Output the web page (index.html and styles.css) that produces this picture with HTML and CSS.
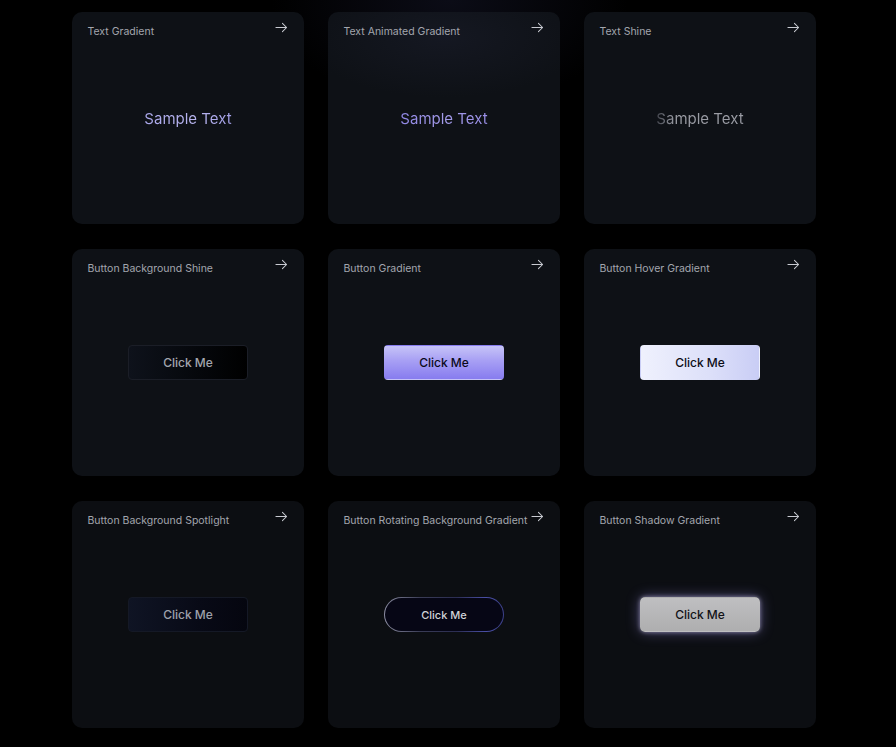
FILE: index.html
```html
<!DOCTYPE html>
<html lang="en">
<head>
<meta charset="utf-8">
<title>Components</title>
<link rel="stylesheet" href="styles.css">
</head>
<body>
<div class="glow-top"></div>
<main class="grid">
  <section class="card">
    <header class="card-head"><span class="card-title">Text Gradient</span><svg class="arrow" viewBox="0 0 14 14"><path d="M1 7h11.5M8 2.5L12.5 7 8 11.5"/></svg></header>
    <div class="card-body"><span class="t-gradient">Sample Text</span></div>
  </section>
  <section class="card card-glow">
    <header class="card-head"><span class="card-title">Text Animated Gradient</span><svg class="arrow" viewBox="0 0 14 14"><path d="M1 7h11.5M8 2.5L12.5 7 8 11.5"/></svg></header>
    <div class="card-body"><span class="t-animated">Sample Text</span></div>
  </section>
  <section class="card">
    <header class="card-head"><span class="card-title">Text Shine</span><svg class="arrow" viewBox="0 0 14 14"><path d="M1 7h11.5M8 2.5L12.5 7 8 11.5"/></svg></header>
    <div class="card-body"><span class="t-shine">Sample Text</span></div>
  </section>

  <section class="card">
    <header class="card-head"><span class="card-title">Button Background Shine</span><svg class="arrow" viewBox="0 0 14 14"><path d="M1 7h11.5M8 2.5L12.5 7 8 11.5"/></svg></header>
    <div class="card-body"><button class="btn btn-shine">Click Me</button></div>
  </section>
  <section class="card">
    <header class="card-head"><span class="card-title">Button Gradient</span><svg class="arrow" viewBox="0 0 14 14"><path d="M1 7h11.5M8 2.5L12.5 7 8 11.5"/></svg></header>
    <div class="card-body"><button class="btn btn-gradient">Click Me</button></div>
  </section>
  <section class="card">
    <header class="card-head"><span class="card-title">Button Hover Gradient</span><svg class="arrow" viewBox="0 0 14 14"><path d="M1 7h11.5M8 2.5L12.5 7 8 11.5"/></svg></header>
    <div class="card-body"><button class="btn btn-hover">Click Me</button></div>
  </section>

  <section class="card card-dim">
    <header class="card-head"><span class="card-title">Button Background Spotlight</span><svg class="arrow" viewBox="0 0 14 14"><path d="M1 7h11.5M8 2.5L12.5 7 8 11.5"/></svg></header>
    <div class="card-body"><button class="btn btn-spot">Click Me</button></div>
  </section>
  <section class="card card-dim">
    <header class="card-head"><span class="card-title">Button Rotating Background Gradient</span><svg class="arrow" viewBox="0 0 14 14"><path d="M1 7h11.5M8 2.5L12.5 7 8 11.5"/></svg></header>
    <div class="card-body"><button class="btn btn-rotate"><span class="btn-rotate-inner">Click Me</span></button></div>
  </section>
  <section class="card card-dim">
    <header class="card-head"><span class="card-title">Button Shadow Gradient</span><svg class="arrow" viewBox="0 0 14 14"><path d="M1 7h11.5M8 2.5L12.5 7 8 11.5"/></svg></header>
    <div class="card-body"><button class="btn btn-shadow">Click Me</button></div>
  </section>
</main>
</body>
</html>
```

FILE: styles.css
```css
* { box-sizing: border-box; }
html, body { margin: 0; padding: 0; }
body {
  background: #000;
  font-family: Inter, "Noto Sans", "Liberation Sans", sans-serif;
  min-height: 747px;
  overflow: hidden;
  position: relative;
}
.glow-top {
  position: absolute;
  left: 270px;
  top: -110px;
  width: 360px;
  height: 220px;
  background: radial-gradient(ellipse at center, rgba(28, 30, 56, 0.4) 0%, rgba(0, 0, 0, 0) 70%);
  pointer-events: none;
}
.grid {
  position: relative;
  display: grid;
  grid-template-columns: repeat(3, 232px);
  grid-template-rows: 212px 227px 227px;
  column-gap: 24px;
  row-gap: 25px;
  padding: 12px 0 0 72px;
}
.card {
  background: #0e1116;
  border-radius: 10px;
  display: flex;
  flex-direction: column;
  padding-bottom: 38px;
  overflow: hidden;
  position: relative;
}
.card-glow {
  background:
    radial-gradient(ellipse 140px 60px at 50% 12%, rgba(22, 25, 36, 0.85) 0%, rgba(14, 17, 22, 0) 100%),
    #0e1116;
}
.card-dim { background: #0c0e12; }
.card-head {
  height: 38px;
  display: flex;
  justify-content: space-between;
  align-items: flex-start;
  padding: 13px 16px 0 15.5px;
}
.card-title {
  font-size: 10.5px;
  line-height: 14px;
  color: #a3a6ae;
  white-space: nowrap;
}
.arrow {
  width: 13px;
  height: 13px;
  margin-top: -4px;
  fill: none;
  stroke: #c9cbd2;
  stroke-width: 1.1;
  stroke-linecap: round;
  stroke-linejoin: round;
  flex-shrink: 0;
}
.card-body {
  flex: 1;
  display: flex;
  align-items: center;
  justify-content: center;
}
.t-gradient, .t-animated, .t-shine {
  font-size: 15px;
  line-height: 20px;
  margin-top: 2px;
  -webkit-background-clip: text;
  background-clip: text;
  color: transparent;
}
.t-gradient { background-image: linear-gradient(90deg, #aaa7ea, #b9b6f0 60%, #a29fe6); }
.t-animated { background-image: linear-gradient(90deg, #8f86e4, #a39be9 50%, #9a8fe8); }
.t-shine { background-image: linear-gradient(90deg, #3e4048 0%, #6f727b 10%, #9a9ca4 22%, #9a9ca4 100%); }

.btn {
  width: 120px;
  height: 35px;
  border-radius: 4px;
  font-family: Inter, "Noto Sans", "Liberation Sans", sans-serif;
  font-size: 12px;
  font-weight: 500;
  border: 1px solid transparent;
  padding: 0;
  cursor: pointer;
}
.btn-shine {
  background: linear-gradient(90deg, #0e121b 0%, #05070b 60%, #000 100%);
  border-color: #1b1e27;
  color: #a3a6ae;
}
.btn-gradient {
  background: linear-gradient(180deg, #c6c3f7 0%, #a79ff4 45%, #877cef 100%);
  color: #0b0b1a;
}
.btn-hover {
  background: linear-gradient(90deg, #eff1fd 0%, #dcdff9 60%, #c9cdf5 100%);
  color: #0c0d16;
}
.btn-spot {
  background: linear-gradient(90deg, #0f1424 0%, #080a16 60%, #05060f 100%);
  border-color: #151926;
  color: #9ea1ab;
}
.btn-rotate {
  border-radius: 18px;
  border: none;
  padding: 1px;
  background: linear-gradient(90deg, #8d8ea3 0%, #3a3c55 30%, #2b2d52 60%, #4a4fa6 85%, #3b3f88 100%);
}
.btn-rotate-inner {
  display: flex;
  align-items: center;
  justify-content: center;
  width: 100%;
  height: 100%;
  border-radius: 17px;
  background: #060615;
  color: #d0d2d8;
  font-size: 11px;
}
.btn-shadow {
  background: linear-gradient(180deg, #bfbfc1 0%, #aeaeaf 100%);
  color: #111216;
  border-radius: 5px;
  box-shadow: 0 0 4px rgba(220, 215, 255, 0.55), 0 0 14px rgba(150, 140, 230, 0.45);
}
```
